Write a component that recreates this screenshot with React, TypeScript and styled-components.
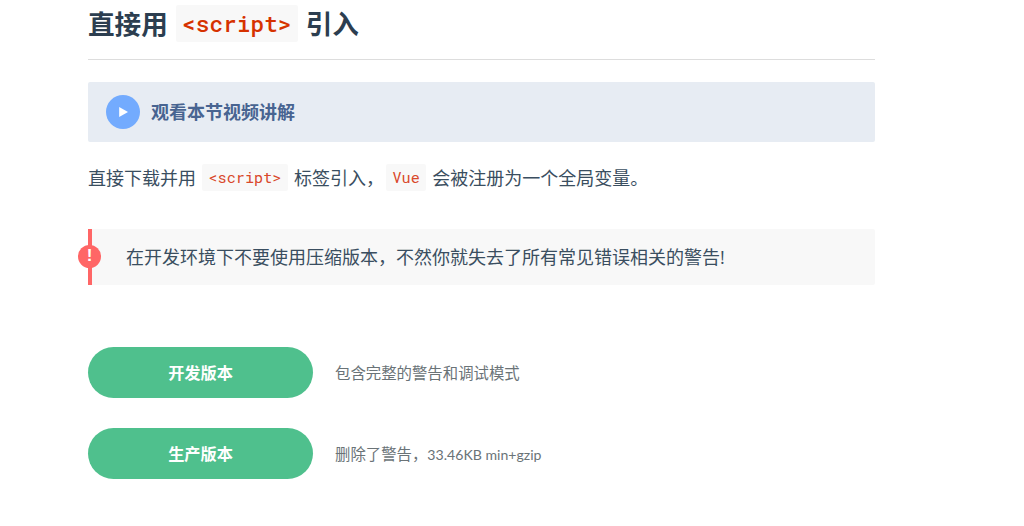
import React from "react";
import styled, { createGlobalStyle } from "styled-components";

const Global = createGlobalStyle`
  html, body { margin: 0; padding: 0; background: #fff; overflow: hidden; }
  body { font-family: "Open Sans", "Noto Sans CJK SC", sans-serif; }
`;

const Page = styled.main`
  width: 787px;
  height: 526px;
  margin-left: 88px;
  display: flex;
  flex-direction: column;
`;

const Heading = styled.h2`
  margin: 0;
  height: 59px;
  border-bottom: 1px solid #ddd;
  display: flex;
  align-items: flex-start;
  font-size: 26.6px;
  line-height: 49px;
  font-weight: 700;
  color: #2c3e50;
  white-space: pre;
`;

const HeadingCode = styled.code`
  margin: 5px 8px 0;
  width: 122px;
  height: 37px;
  display: inline-flex;
  align-items: center;
  justify-content: center;
  border-radius: 2px;
  background: #f8f8f8;
  color: #d63200;
  font-family: "Roboto Mono", "DejaVu Sans Mono", "Liberation Mono", monospace;
  font-size: 22.8px;
  font-weight: 500;
  line-height: 37px;
`;

const VideoBox = styled.a`
  margin-top: 22px;
  height: 60px;
  box-sizing: border-box;
  padding: 0 0 2px 18px;
  display: flex;
  align-items: center;
  gap: 11px;
  background: #e7ecf3;
  border-radius: 2px;
  color: #486491;
  font-size: 18px;
  font-weight: 700;
`;

const PlayCircle = styled.svg`
  width: 34px;
  height: 34px;
  flex: none;
  margin-bottom: -2px;
`;

const Paragraph = styled.p`
  margin: 21px 0 0;
  height: 28px;
  display: flex;
  align-items: center;
  font-size: 18px;
  color: #3a4e60;
  white-space: pre;
`;

const InlineCode = styled.code<{ $tight?: boolean }>`
  margin: 0 6px 0 ${(p) => (p.$tight ? "2px" : "6px")};
  height: 27px;
  padding: 0 6.5px;
  display: inline-flex;
  align-items: center;
  border-radius: 2px;
  background: #f8f8f8;
  color: #d9482b;
  font-family: "Roboto Mono", "DejaVu Sans Mono", "Liberation Mono", monospace;
  font-size: 15.2px;
`;

const Warning = styled.div`
  position: relative;
  margin-top: 38px;
  height: 56px;
  display: flex;
  align-items: center;
  box-sizing: border-box;
  padding: 0 0 2px 34px;
  background: #f8f8f8;
  border-left: 4px solid #ff6666;
  border-radius: 0 2px 2px 0;
  font-size: 18px;
  color: #3a4e60;
`;

const WarningMark = styled.span`
  position: absolute;
  left: -14px;
  top: 16px;
  width: 23px;
  height: 23px;
  border-radius: 50%;
  background: #ff6666;
  color: #fff;
  font-size: 17px;
  font-weight: 700;
  line-height: 22px;
  text-align: center;
  font-family: "Liberation Sans", sans-serif;
`;

const DownloadList = styled.div`
  margin-top: 62px;
  display: flex;
  flex-direction: column;
  gap: 30px;
`;

const DownloadRow = styled.div`
  display: flex;
  align-items: center;
  gap: 22px;
`;

const DownloadButton = styled.a`
  width: 225px;
  height: 51px;
  padding-bottom: 2px;
  box-sizing: border-box;
  display: flex;
  align-items: center;
  justify-content: center;
  border-radius: 26px;
  background: #4fc08d;
  color: #fff;
  font-size: 16.2px;
  font-weight: 700;
`;

const Note = styled.span`
  font-family: "Lato", "Noto Sans CJK SC", sans-serif;
  font-size: 15.4px;
  color: #6a7377;
  margin-top: -2px;
`;

const NoteLatin = styled.span`
  font-size: 14.1px;
`;

export default function App() {
  return (
    <Page>
      <Global />
      <Heading>
        直接用<HeadingCode>&lt;script&gt;</HeadingCode>引入
      </Heading>
      <VideoBox>
        <PlayCircle viewBox="0 0 34 34" aria-hidden="true">
          <circle cx="17" cy="17" r="17" fill="#73abfe" />
          <path d="M13.2 12 L22 17 L13.2 22 Z" fill="#fff" />
        </PlayCircle>
        观看本节视频讲解
      </VideoBox>
      <Paragraph>
        直接下载并用<InlineCode>&lt;script&gt;</InlineCode>标签引入，<InlineCode $tight>Vue</InlineCode>会被注册为一个全局变量。
      </Paragraph>
      <Warning>
        <WarningMark>!</WarningMark>
        在开发环境下不要使用压缩版本，不然你就失去了所有常见错误相关的警告!
      </Warning>
      <DownloadList>
        <DownloadRow>
          <DownloadButton>开发版本</DownloadButton>
          <Note>包含完整的警告和调试模式</Note>
        </DownloadRow>
        <DownloadRow>
          <DownloadButton>生产版本</DownloadButton>
          <Note>
            删除了警告，<NoteLatin>33.46KB min+gzip</NoteLatin>
          </Note>
        </DownloadRow>
      </DownloadList>
    </Page>
  );
}
